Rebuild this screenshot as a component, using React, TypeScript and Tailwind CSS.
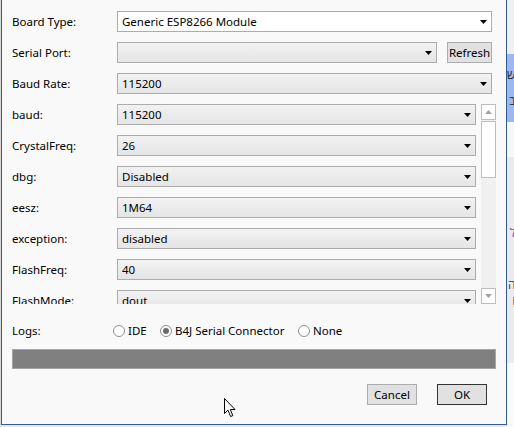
import React from "react";

const font = { fontFamily: '"Segoe UI", "Noto Sans", "Open Sans", sans-serif' };

function Arrow({ color = "#000" }: { color?: string }) {
  return (
    <svg width="7" height="4" viewBox="0 0 7 4" className="shrink-0">
      <path d="M0 0 H7 L3.5 4 Z" fill={color} />
    </svg>
  );
}

function Select({ value, white }: { value?: string; white?: boolean }) {
  return (
    <div
      className={
        "flex h-[21px] flex-1 items-center justify-between border border-[#acacac] pl-[4px] pr-[4px] " +
        (white ? "bg-white" : "bg-gradient-to-b from-[#f2f2f2] to-[#e5e5e5]")
      }
    >
      <span className="whitespace-nowrap leading-none text-black">{value}</span>
      <Arrow />
    </div>
  );
}

function Row({ label, children }: { label: string; children: React.ReactNode }) {
  return (
    <div className="flex h-[21px] shrink-0 items-center">
      <div className="w-[105px] shrink-0 whitespace-nowrap leading-none text-black">{label}</div>
      {children}
    </div>
  );
}

function Radio({ checked, label, width }: { checked?: boolean; label: string; width?: string }) {
  return (
    <div className={"flex shrink-0 items-center " + (width ?? "")}>
      <span className="flex h-[12px] w-[12px] shrink-0 items-center justify-center rounded-full border border-[#8f8f8f] bg-white">
        {checked ? <span className="h-[6px] w-[6px] rounded-full bg-[#6b6b6b]" /> : null}
      </span>
      <span className="ml-[3px] whitespace-nowrap leading-none text-black">{label}</span>
    </div>
  );
}

const scrollRows: [string, string][] = [
  ["baud:", "115200"],
  ["CrystalFreq:", "26"],
  ["dbg:", "Disabled"],
  ["eesz:", "1M64"],
  ["exception:", "disabled"],
  ["FlashFreq:", "40"],
  ["FlashMode:", "dout"],
];

export default function App() {
  return (
    <div
      className="relative flex h-[427px] w-[514px] overflow-hidden bg-[#e6e6e6] text-[11.5px]"
      style={font}
    >
      <div className="w-[1px] shrink-0 bg-[#d9d9d9]" />
      <div className="flex h-[425px] w-[506px] shrink-0 flex-col border-x border-b border-[#2e5c96] bg-[#f9f9f9] pl-[10px] pr-[10px] pt-[11px]">
        <div className="mr-[4px] flex flex-col gap-[10px]">
          <Row label="Board Type:">
            <Select value="Generic ESP8266 Module" white />
          </Row>
          <Row label="Serial Port:">
            <Select />
            <button className="ml-[10px] h-[21px] w-[45px] whitespace-nowrap border border-[#adadad] bg-[#e1e1e1] px-0 leading-none text-black">
              Refresh
            </button>
          </Row>
          <Row label="Baud Rate:">
            <Select value="115200" />
          </Row>
        </div>

        <div className="mt-[10px] flex h-[200px] shrink-0">
          <div className="flex flex-1 flex-col gap-[10px] overflow-hidden">
            {scrollRows.map(([label, value]) => (
              <Row key={label} label={label}>
                <Select value={value} />
              </Row>
            ))}
          </div>
          <div className="ml-[5px] flex w-[15px] shrink-0 flex-col bg-[#f0f0f0]">
            <div className="flex h-[16px] items-center justify-center border border-[#bdbdbd] bg-white">
              <svg width="7" height="4" viewBox="0 0 7 4">
                <path d="M0 4 H7 L3.5 0 Z" fill="#a3a3a3" />
              </svg>
            </div>
            <div className="mt-[1px] h-[57px] border border-[#bdbdbd] bg-white" />
            <div className="flex-1" />
            <div className="flex h-[16px] items-center justify-center border border-[#bdbdbd] bg-white">
              <Arrow color="#a3a3a3" />
            </div>
          </div>
        </div>

        <div className="mt-[17px] flex h-[20px] items-center">
          <div className="w-[101px] shrink-0 leading-none text-black">Logs:</div>
          <Radio label="IDE" width="w-[47px]" />
          <Radio label="B4J Serial Connector" checked width="w-[138px]" />
          <Radio label="None" />
        </div>

        <div className="mt-[8px] h-[20px] border border-[#a6a6a6] bg-[#808080]" />

        <div className="mr-[9px] mt-[15px] flex justify-end gap-[20px]">
          <button className="h-[21px] w-[50px] border border-[#adadad] bg-[#e1e1e1] leading-none text-black">
            Cancel
          </button>
          <button className="h-[21px] w-[50px] border border-[#333333] bg-[#e1e1e1] leading-none text-black">
            OK
          </button>
        </div>
      </div>

      <div className="flex flex-1 flex-col text-[12px] leading-none" dir="rtl">
        <div className="h-[54px] bg-[#f0f0f0]" />
        <div className="flex h-[68px] flex-col gap-[14px] bg-[#9db8ee] pt-[15px] text-[#222]">
          <span>ש</span>
          <span>ב</span>
        </div>
        <div className="h-[35px] bg-[#f7f7f7]" />
        <div className="flex h-[206px] flex-col bg-[#ebebeb] pt-[70px] text-[#7a3fa0]">
          <span>ל</span>
          <span className="mt-[40px] text-[#333]">ה</span>
          <span className="mt-[6px] h-[8px] w-[2px] bg-[#d08a1c]" />
        </div>
        <div className="flex-1 bg-[#fafafa]" />
      </div>

      <svg
        className="absolute left-[224px] top-[398px]"
        width="13"
        height="20"
        viewBox="0 0 13 20"
      >
        <path
          d="M0.5 0.5 L0.5 15.5 L4 12.2 L6.6 18.5 L8.8 17.6 L6.3 11.5 L11 11.5 Z"
          fill="#fff"
          stroke="#000"
          strokeWidth="1"
          strokeLinejoin="miter"
        />
      </svg>
    </div>
  );
}
